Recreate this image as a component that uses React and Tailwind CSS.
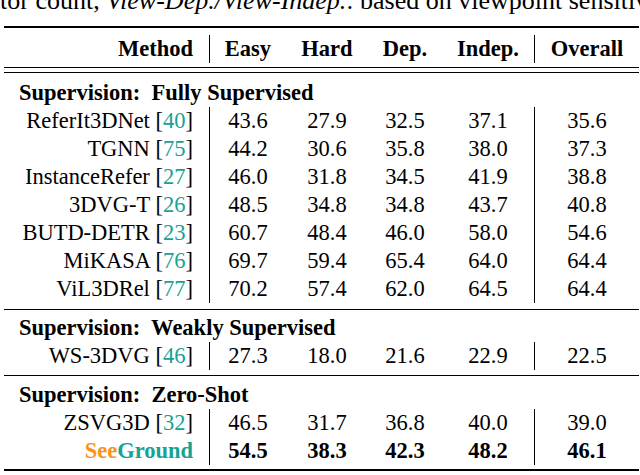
import React from "react";

// serif face set straight on every text span, not only inherited
const serif = "font-['Liberation_Serif']";

const sections = [
  {
    title: "Supervision:\u00a0 Fully Supervised",
    pt: "pt-[6px]",
    pb: "pb-[6px]",
    rows: [
      ["ReferIt3DNet", "40", "43.6", "27.9", "32.5", "37.1", "35.6"],
      ["TGNN", "75", "44.2", "30.6", "35.8", "38.0", "37.3"],
      ["InstanceRefer", "27", "46.0", "31.8", "34.5", "41.9", "38.8"],
      ["3DVG-T", "26", "48.5", "34.8", "34.8", "43.7", "40.8"],
      ["BUTD-DETR", "23", "60.7", "48.4", "46.0", "58.0", "54.6"],
      ["MiKASA", "76", "69.7", "59.4", "65.4", "64.0", "64.4"],
      ["ViL3DRel", "77", "70.2", "57.4", "62.0", "64.5", "64.4"],
    ],
  },
  {
    title: "Supervision:\u00a0 Weakly Supervised",
    pt: "pt-[4px]",
    pb: "pb-[5px]",
    rows: [["WS-3DVG", "46", "27.3", "18.0", "21.6", "22.9", "22.5"]],
  },
  {
    title: "Supervision:\u00a0 Zero-Shot",
    pt: "pt-[5px]",
    pb: "pb-[4px]",
    rows: [
      ["ZSVG3D", "32", "46.5", "31.7", "36.8", "40.0", "39.0"],
      ["SeeGround", null, "54.5", "38.3", "42.3", "48.2", "46.1"],
    ],
  },
];

const grid = "grid grid-cols-[206px_76px_82px_74px_93px_104px]";

function Row({ row }) {
  const [name, cite, ...vals] = row;
  const ours = cite === null;
  return (
    <div className={`${grid} h-[28px] leading-[28px]`}>
      <p className="border-r border-black pr-[16px] text-right whitespace-nowrap">
        {ours ? (
          <span className={`${serif} font-bold`}>
            <span className={`${serif} text-[#f7941d]`}>See</span>
            <span className={`${serif} text-[#16a396]`}>Ground</span>
          </span>
        ) : (
          <span className={serif}>
            {name} [<span className={`${serif} text-[#16a396]`}>{cite}</span>]
          </span>
        )}
      </p>
      {vals.map((v, i) => (
        <p key={i} className={`text-center ${i === 3 ? "border-r border-black" : ""}`}>
          <span className={`${serif} ${ours ? "font-bold" : ""}`}>{v}</span>
        </p>
      ))}
    </div>
  );
}

function Head({ children, sep }) {
  return (
    <p className={`text-center leading-[28px] ${sep ? "border-r border-black" : ""}`}>
      <span className={`${serif} font-bold`}>{children}</span>
    </p>
  );
}

export default function App() {
  return (
    <div className="w-[640px] h-[475px] overflow-hidden bg-white text-black font-[Liberation_Serif,serif] text-[22.5px]">
      <div className="h-[16px] overflow-hidden">
        <p className="-mt-[11px] leading-[24px] whitespace-nowrap text-[26px]">
          <span className={serif}>
            tor count, <i>View-Dep./View-Indep.</i>: based on viewpoint sensitivity.
          </span>
        </p>
      </div>

      <div className="ml-[4px] w-[635px] mt-[10px] border-t-2 border-black">
        <div className={`${grid} pt-[7px] pb-[4px]`}>
          <p className="border-r border-black pr-[16px] text-right h-[28px] leading-[28px]">
            <span className={`${serif} font-bold`}>Method</span>
          </p>
          <Head>Easy</Head>
          <Head>Hard</Head>
          <Head>Dep.</Head>
          <Head sep>Indep.</Head>
          <Head>Overall</Head>
        </div>
        <div className="h-[6px] border-y border-black" />

        {sections.map((s, si) => (
          <div
            key={si}
            className={`${s.pt} ${s.pb} ${si === sections.length - 1 ? "border-b-2" : "border-b"} border-black`}
          >
            <p className="pl-[15px] h-[28px] leading-[28px] whitespace-nowrap">
              <span className={`${serif} font-bold`}>{s.title}</span>
            </p>
            {s.rows.map((r, ri) => (
              <Row key={ri} row={r} />
            ))}
          </div>
        ))}
      </div>
    </div>
  );
}
